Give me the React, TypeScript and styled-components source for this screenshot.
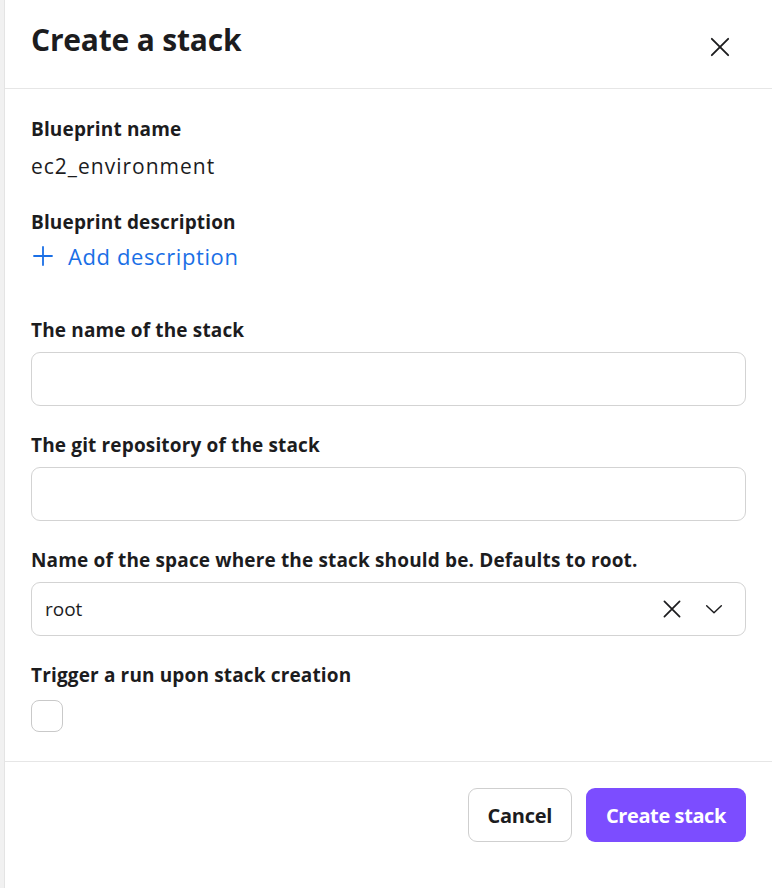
import { useState } from "react"
import styled, { createGlobalStyle } from "styled-components"

const GlobalStyle = createGlobalStyle`
    html, body {
        margin: 0;
        padding: 0;
        background: #ffffff;
    }
    * {
        box-sizing: border-box;
    }
    body {
        font-family: "Open Sans", "Noto Sans", sans-serif;
        color: #1c1c1e;
    }
`

function CloseIcon({ size }: { size: number }) {
    return (
        <svg width={size} height={size} viewBox="0 0 24 24" fill="none" stroke="#1c1c1e" strokeWidth="1.6" strokeLinecap="round">
            <path d="M5 5L19 19M19 5L5 19" />
        </svg>
    )
}

function ChevronIcon() {
    return (
        <svg width="22" height="22" viewBox="0 0 24 24" fill="none" stroke="#1c1c1e" strokeWidth="1.6" strokeLinecap="round" strokeLinejoin="round">
            <path d="M4 8.5L12 16L20 8.5" />
        </svg>
    )
}

function PlusIcon() {
    return (
        <svg width="24" height="24" viewBox="0 0 24 24" fill="none" stroke="#1a6fe6" strokeWidth="1.8" strokeLinecap="round">
            <path d="M12 3V21M3 12H21" />
        </svg>
    )
}

export default function App() {
    const [name, setName] = useState('')
    const [repo, setRepo] = useState('')
    const [space, setSpace] = useState('root')
    const [trigger, setTrigger] = useState(false)

    return (
        <>
            <GlobalStyle />
            <Page>
                <EdgeStrip />
                <Drawer>
                    <Header>
                        <Title>Create a stack</Title>
                        <HeaderClose aria-label="Close">
                            <CloseIcon size={28} />
                        </HeaderClose>
                    </Header>
                    <Body>
                        <InfoBlock>
                            <Label>Blueprint name</Label>
                            <Value>ec2_environment</Value>
                        </InfoBlock>
                        <InfoBlock>
                            <Label>Blueprint description</Label>
                            <LinkButton>
                                <PlusIcon />
                                Add description
                            </LinkButton>
                        </InfoBlock>
                        <Fields>
                            <Field>
                                <Label>The name of the stack</Label>
                                <Input value={name} onChange={(e) => setName(e.target.value)} />
                            </Field>
                            <Field>
                                <Label>The git repository of the stack</Label>
                                <Input value={repo} onChange={(e) => setRepo(e.target.value)} />
                            </Field>
                            <Field>
                                <Label>Name of the space where the stack should be. Defaults to root.</Label>
                                <Select>
                                    <SelectValue>{space}</SelectValue>
                                    <SelectIcons>
                                        <IconButton aria-label="Clear" onClick={() => setSpace('')}>
                                            <CloseIcon size={26} />
                                        </IconButton>
                                        <IconButton aria-label="Open">
                                            <ChevronIcon />
                                        </IconButton>
                                    </SelectIcons>
                                </Select>
                            </Field>
                            <Field $gap={13}>
                                <Label>Trigger a run upon stack creation</Label>
                                <Checkbox checked={trigger} onClick={() => setTrigger(!trigger)} />
                            </Field>
                        </Fields>
                    </Body>
                    <Footer>
                        <SecondaryButton>Cancel</SecondaryButton>
                        <PrimaryButton>Create stack</PrimaryButton>
                    </Footer>
                </Drawer>
            </Page>
        </>
    )
}

const Page = styled.div`
    display: flex;
    width: 772px;
    height: 888px;
    overflow: hidden;
`

const EdgeStrip = styled.div`
    width: 5px;
    flex-shrink: 0;
    background: #f1f1f1;
    border-right: 1px solid #e4e4e4;
`

const Drawer = styled.div`
    flex: 1;
    display: flex;
    flex-direction: column;
    background: #ffffff;
`

const Header = styled.div`
    height: 89px;
    display: flex;
    align-items: flex-start;
    justify-content: space-between;
    padding: 20px 38px 0 26px;
    border-bottom: 1px solid #e6e6e6;
`

const Title = styled.h1`
    margin: 0;
    font-size: 30px;
    font-weight: 700;
    line-height: 40px;
    letter-spacing: -0.2px;
    color: #1c1c1e;
`

const IconButton = styled.button`
    display: flex;
    align-items: center;
    justify-content: center;
    border: none;
    background: none;
    padding: 0;
    cursor: pointer;
`

const HeaderClose = styled(IconButton)`
    margin-top: 13px;
`

const Body = styled.div`
    display: flex;
    flex-direction: column;
    padding: 28px 26px 29px 26px;
    border-bottom: 1px solid #e6e6e6;
`

const InfoBlock = styled.div`
    display: flex;
    flex-direction: column;
    gap: 11px;
    margin-bottom: 30px;
`

const Label = styled.label`
    font-size: 19px;
    font-weight: 700;
    line-height: 24px;
    letter-spacing: 0.15px;
    color: #1c1c1e;
`

const Value = styled.span`
    font-size: 21px;
    line-height: 28px;
    letter-spacing: 1px;
    color: #1c1c1e;
`

const LinkButton = styled.button`
    display: flex;
    align-items: center;
    gap: 13px;
    border: none;
    background: none;
    padding: 0;
    margin-top: -4px;
    font-family: inherit;
    font-size: 22px;
    line-height: 30px;
    letter-spacing: 0.6px;
    color: #1a6fe6;
    cursor: pointer;
    align-self: flex-start;
`

const Fields = styled.div`
    display: flex;
    flex-direction: column;
    gap: 27px;
    margin-top: 17px;
`

const Field = styled.div<{ $gap?: number }>`
    display: flex;
    flex-direction: column;
    gap: ${props => props.$gap ?? 10}px;
`

const Input = styled.input`
    height: 54px;
    width: 100%;
    border: 1px solid #d3d3d3;
    border-radius: 9px;
    padding: 0 13px;
    font-family: inherit;
    font-size: 18px;
    outline: none;
`

const Select = styled.div`
    height: 54px;
    display: flex;
    align-items: center;
    border: 1px solid #d3d3d3;
    border-radius: 9px;
    padding: 0 20px 0 13px;
`

const SelectValue = styled.span`
    flex: 1;
    font-size: 19px;
    color: #1c1c1e;
`

const SelectIcons = styled.div`
    display: flex;
    align-items: center;
    gap: 18px;
`

const Checkbox = styled.button<{ checked: boolean }>`
    width: 32px;
    height: 32px;
    border: 1px solid #c9c9c9;
    border-radius: 8px;
    background: ${props => props.checked ? '#7c4dff' : '#ffffff'};
    padding: 0;
    cursor: pointer;
`

const Footer = styled.div`
    display: flex;
    justify-content: flex-end;
    gap: 14px;
    padding: 26px 26px;
`

const SecondaryButton = styled.button`
    height: 54px;
    padding: 0 19px;
    border: 1px solid #cfcfcf;
    border-radius: 9px;
    background: #ffffff;
    font-family: inherit;
    font-size: 20px;
    font-weight: 700;
    letter-spacing: -0.3px;
    color: #1c1c1e;
    cursor: pointer;
`

const PrimaryButton = styled.button`
    height: 54px;
    padding: 0 20px;
    border: none;
    border-radius: 9px;
    background: #7c4dff;
    font-family: inherit;
    font-size: 20px;
    font-weight: 700;
    letter-spacing: -0.4px;
    color: #ffffff;
    cursor: pointer;
`
